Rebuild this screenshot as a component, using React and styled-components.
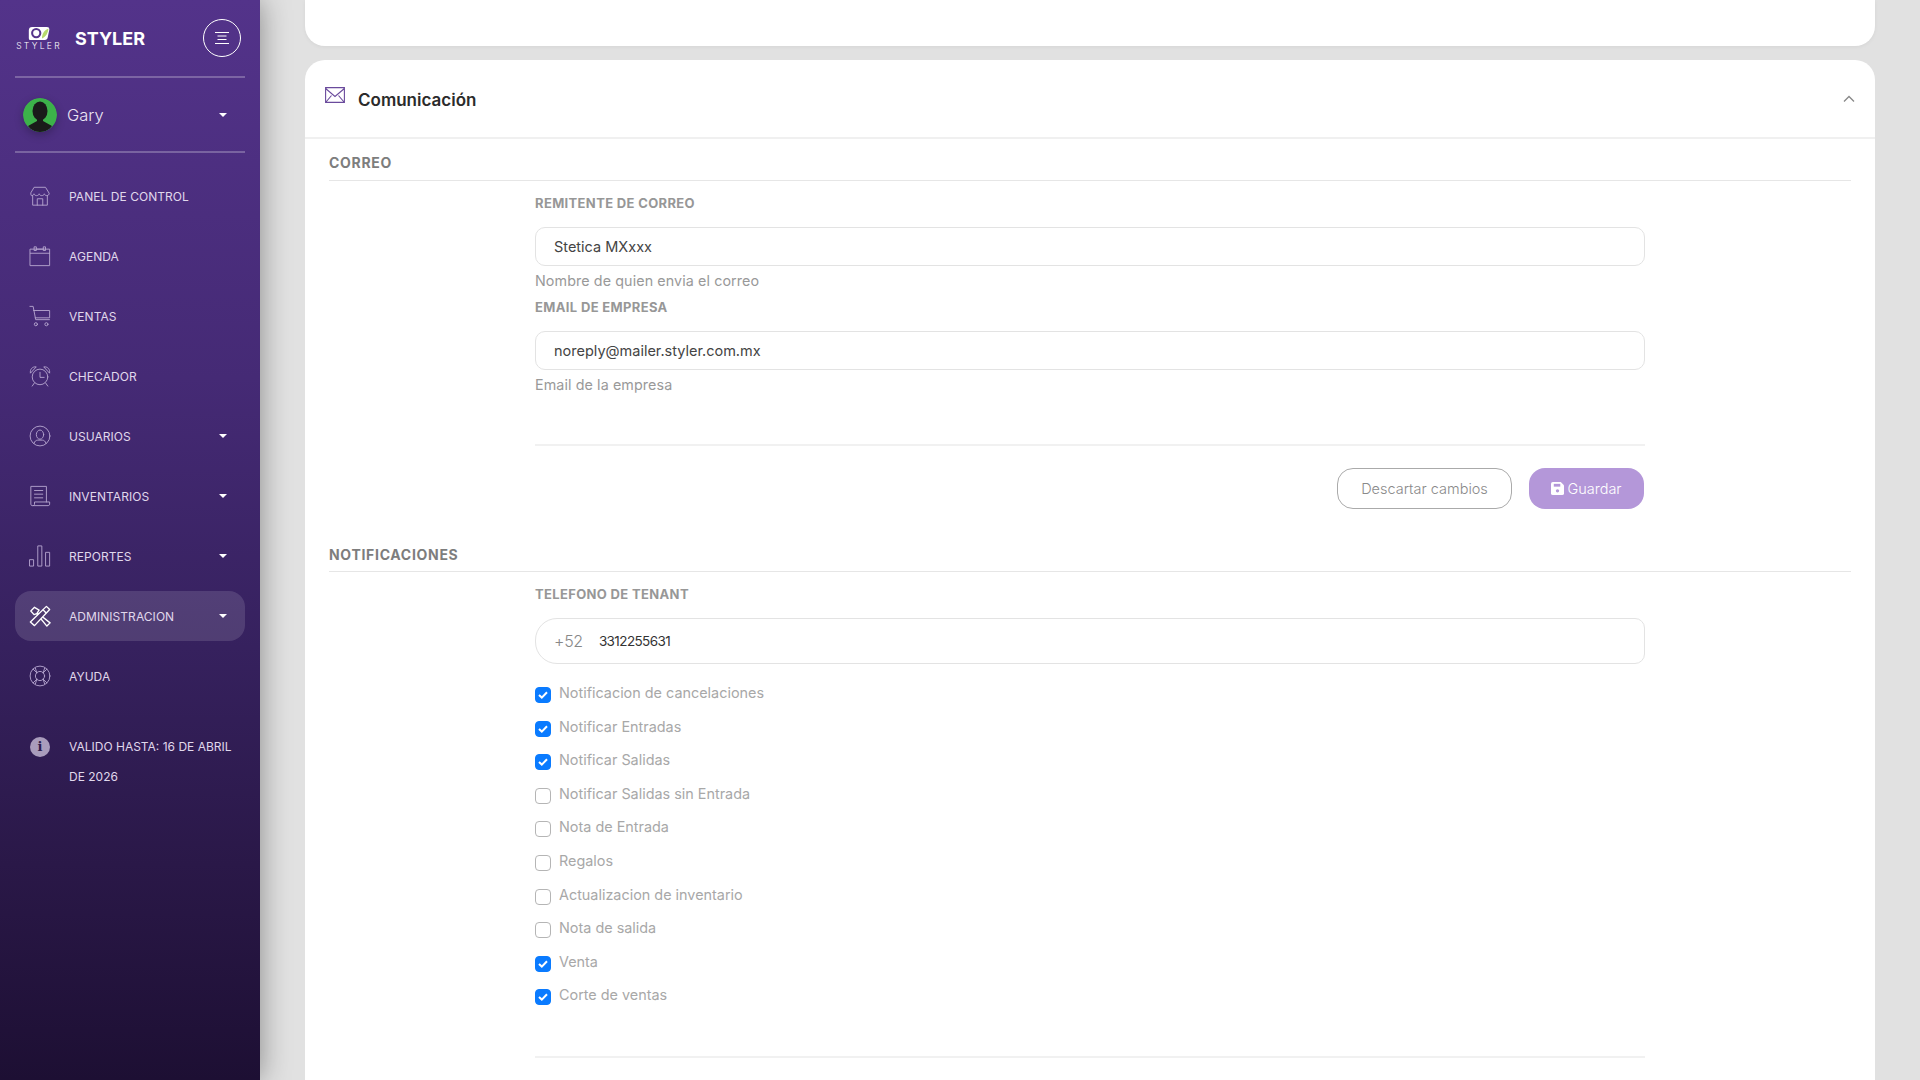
import React from 'react'
import styled, { createGlobalStyle } from 'styled-components'

const GlobalStyle = createGlobalStyle`
  html, body {
    margin: 0;
    height: 100%;
    background: #e1e1e1;
    font-family: Inter, "Noto Sans", "Liberation Sans", sans-serif;
  }
  * { box-sizing: border-box; }
`

const line = { fill: 'none', stroke: 'currentColor', strokeWidth: 1, strokeLinecap: 'round', strokeLinejoin: 'round' }

const icons = {
  store: (
    <g {...line}>
      <path d="M6 2.500h12l4 6.500c0 1.600-1.200 2.600-2.600 2.600-1.300 0-2.400-.8-2.700-2-.3 1.200-1.500 2-2.800 2s-2.400-.8-2.800-2c-.4 1.200-1.500 2-2.800 2s-2.500-.8-2.900-2c-.3 1.200-1.400 2-2.700 2C2.200 11.600 2 10.600 2 9z" />
      <path d="M4 11.500V22h16V11.500M9 22v-7h6v7" />
    </g>
  ),
  calendar: (
    <g {...line}>
      <path d="M1.500 4.500h21v18h-21zM1.500 9h21" />
      <path d="M6 2h2v4H6zM16 2h2v4h-2zM8 4.500h8" />
    </g>
  ),
  cart: (
    <g {...line}>
      <path d="M1 1.500h3.500l2.800 14.500h15" />
      <path d="M5 6h17.500v8H6.800" />
      <circle cx="7.500" cy="21" r="1.700" />
      <circle cx="19" cy="21" r="1.700" />
    </g>
  ),
  alarm: (
    <g {...line}>
      <circle cx="12" cy="13" r="8.500" />
      <path d="M12 8v5.500h4.500M6 19.500 3.500 23M18 19.500l2.500 3.500" />
      <path d="M1.500 8.500C.8 5 3.500 1.500 7.500 2zM22.500 8.500c.7-3.500-2-7-6-6.500z" />
    </g>
  ),
  user: (
    <g {...line}>
      <circle cx="12" cy="12" r="10.800" />
      <ellipse cx="12" cy="10.500" rx="4" ry="5" />
      <path d="M5.500 20c.5-2.500 2.500-3.500 4-3.500h5c1.500 0 3.500 1 4 3.500" />
    </g>
  ),
  list: (
    <g {...line}>
      <path d="M19 18.500V1.500H2v19.500c0 1 .8 1.500 1.500 1.500h17.500c1 0 1.500-.8 1.500-1.500v-2.500H6v2.500c0 .8-.7 1.500-1.500 1.500" />
      <path d="M6 6h9M6 10h9M6 14h9" />
    </g>
  ),
  chart: (
    <g {...line}>
      <path d="M1 16h4v7H1zM10 1h4v22h-4zM18.500 8h4v15h-4z" />
    </g>
  ),
  tools: (
    <g fill="#4e3a6e" stroke="currentColor" strokeWidth="1.500" strokeLinejoin="round">
      <path d="M2 6.500 6 2.500l5 3-2 3 14 11-3.500 3.500-11-13.500-3 1z" />
      <path d="M19 1.500 22.500 5 6 22.500 1.500 18.500z" />
      <path d="M15 5l4 4" fill="none" />
    </g>
  ),
  help: (
    <g {...line}>
      <circle cx="12" cy="12" r="10.800" />
      <circle cx="12" cy="12" r="5" />
      <path d="M4.500 4.500l4 4M19.500 4.500l-4 4M4.500 19.500l4-4M19.500 19.500l-4-4M7 3.500l1.500 5M17 3.500 15.500 8.500M7 20.500l1.500-5M17 20.500l-1.500-5" />
    </g>
  ),
}

const NAV = [
  { icon: 'store', label: 'Panel de control' },
  { icon: 'calendar', label: 'Agenda' },
  { icon: 'cart', label: 'Ventas' },
  { icon: 'alarm', label: 'Checador' },
  { icon: 'user', label: 'Usuarios', caret: true },
  { icon: 'list', label: 'Inventarios', caret: true },
  { icon: 'chart', label: 'Reportes', caret: true },
  { icon: 'tools', label: 'Administracion', caret: true, active: true },
  { icon: 'help', label: 'Ayuda' },
]

const NOTIFICATIONS = [
  { label: 'Notificacion de cancelaciones', on: true },
  { label: 'Notificar Entradas', on: true },
  { label: 'Notificar Salidas', on: true },
  { label: 'Notificar Salidas sin Entrada' },
  { label: 'Nota de Entrada' },
  { label: 'Regalos' },
  { label: 'Actualizacion de inventario' },
  { label: 'Nota de salida' },
  { label: 'Venta', on: true },
  { label: 'Corte de ventas', on: true },
]

const App = () => {
  return (
    <Page>
      <GlobalStyle />
      <Sidebar>
        <Brand>
          <Logo>
            <svg width="23" height="15" viewBox="0 0 28 18">
              <path d="M5 1h18c2 0 3 1 3 3l-2 10c-.3 2-1.500 3-3.500 3H3c-1.500 0-2-1-2-2.500V5c0-2.500 1.500-4 4-4z" fill="#fff" />
              <circle cx="10" cy="8.500" r="5" fill="none" stroke="#57358c" strokeWidth="2.500" />
              <path d="M17 15c0-6 3-10 8-12-1 6-3 10-8 12z" fill="#b6d96b" />
            </svg>
            <LogoText>STYLER</LogoText>
          </Logo>
          <BrandName>STYLER</BrandName>
          <MenuButton>
            <svg width="16" height="14" viewBox="0 0 16 14" fill="none" stroke="#fff" strokeWidth="1">
              <path d="M1 1.500h14M3.500 5h9M3.500 8.500h9M1 12.500h14" />
            </svg>
          </MenuButton>
        </Brand>
        <UserRow>
          <Avatar>
            <svg width="34" height="34" viewBox="0 0 34 34">
              <circle cx="17" cy="17" r="17" fill="#3cb14a" />
              <ellipse cx="17" cy="13" rx="7.500" ry="9.500" fill="#1a1a1a" />
              <path d="M14 20h6v3l9 5c-3 4-7 6-12 6s-9-2-12-6l9-5z" fill="#1a1a1a" />
            </svg>
          </Avatar>
          <UserName>Gary</UserName>
          <Caret />
        </UserRow>
        <Nav>
          {NAV.map((item) => (
            <NavItem key={item.label} $active={item.active}>
              <NavIcon $active={item.active}>
                <svg width="22" height="22" viewBox="0 0 24 24">{icons[item.icon]}</svg>
              </NavIcon>
              <NavLabel>{item.label}</NavLabel>
              {item.caret && <Caret />}
            </NavItem>
          ))}
          <ValidRow>
            <InfoBadge>i</InfoBadge>
            <ValidText>Valido hasta: 16 de abril de 2026</ValidText>
          </ValidRow>
        </Nav>
      </Sidebar>
      <Main>
        <TopCard />
        <Card>
          <CardHeader>
            <svg width="20" height="16" viewBox="0 0 20 16" fill="none" stroke="#6a4a9c" strokeWidth="1.100">
              <path d="M.6.600h18.800v14.800H.6zM.6 1.500 10 9.500l9.400-8M1 15l5.500-6.500M19 15l-5.500-6.500" />
            </svg>
            <CardTitle>Comunicación</CardTitle>
            <Chevron width="12" height="8" viewBox="0 0 12 8" fill="none" stroke="#888" strokeWidth="1.300">
              <path d="M1 6.500 6 1.500l5 5" />
            </Chevron>
          </CardHeader>
          <CardBody>
            <SectionTitle>Correo</SectionTitle>
            <Form>
              <FieldLabel>Remitente de correo</FieldLabel>
              <Field>Stetica MXxxx</Field>
              <Help>Nombre de quien envia el correo</Help>
              <FieldLabel $top={10}>Email de empresa</FieldLabel>
              <Field>noreply@mailer.styler.com.mx</Field>
              <Help>Email de la empresa</Help>
              <Divider $top={51} />
              <Actions>
                <GhostButton>Descartar cambios</GhostButton>
                <SaveButton>
                  <svg width="13" height="13" viewBox="0 0 14 14">
                    <path d="M2 0h8.500L14 3.500V12a2 2 0 0 1-2 2H2a2 2 0 0 1-2-2V2a2 2 0 0 1 2-2z" fill="#fff" />
                    <rect x="3" y="2" width="7" height="3" fill="#b497d9" />
                    <circle cx="7" cy="9.500" r="1.800" fill="#b497d9" />
                  </svg>
                  Guardar
                </SaveButton>
              </Actions>
            </Form>
            <SectionTitle $top={37} $tight>Notificaciones</SectionTitle>
            <Form>
              <FieldLabel>Telefono de tenant</FieldLabel>
              <PhoneField>
                <Prefix>+52</Prefix>
                <PhoneNumber>3312255631</PhoneNumber>
              </PhoneField>
              <Checks>
                {NOTIFICATIONS.map((n) => (
                  <CheckRow key={n.label}>
                    <CheckBox $on={n.on}>
                      {n.on && (
                        <svg width="10" height="8" viewBox="0 0 10 8" fill="none" stroke="#fff" strokeWidth="2">
                          <path d="M1 4l2.800 2.600L9 1.200" />
                        </svg>
                      )}
                    </CheckBox>
                    <CheckLabel>{n.label}</CheckLabel>
                  </CheckRow>
                ))}
              </Checks>
              <Divider $top={50} />
            </Form>
          </CardBody>
        </Card>
      </Main>
    </Page>
  )
}

const Page = styled.div`
  display: flex;
  height: 100vh;
  overflow: hidden;
  background: #e1e1e1;
`

const Sidebar = styled.aside`
  flex: 0 0 260px;
  height: 100%;
  padding: 0 15px;
  background: linear-gradient(180deg, #53338a 0%, #452a75 35%, #36215e 60%, #2a1848 80%, #1d0f33 100%);
  box-shadow: 0 0 28px rgba(0, 0, 0, 0.4);
  position: relative;
  z-index: 2;
`

const Brand = styled.div`
  display: flex;
  align-items: center;
  height: 78px;
  border-bottom: 2px solid rgba(255, 255, 255, 0.25);
`

const Logo = styled.div`
  display: flex;
  flex-direction: column;
  align-items: center;
  width: 49px;
  line-height: 1;
`

const LogoText = styled.span`
  font-size: 8.5px;
  font-weight: 300;
  letter-spacing: 2.3px;
  margin-left: -3px;
  margin-right: -2px;
  color: #fff;
  margin-top: 1px;
`

const BrandName = styled.span`
  margin-left: 11px;
  font-size: 18px;
  font-weight: 700;
  color: #fff;
`

const MenuButton = styled.div`
  display: flex;
  align-items: center;
  justify-content: center;
  width: 38px;
  height: 38px;
  margin-left: auto;
  margin-right: 4px;
  border: 1px solid #fff;
  border-radius: 50%;
`

const UserRow = styled.div`
  display: flex;
  align-items: center;
  height: 75px;
  padding-left: 8px;
  border-bottom: 2px solid rgba(255, 255, 255, 0.25);
`

const Avatar = styled.div`
  width: 34px;
  height: 34px;
  border-radius: 50%;
  overflow: hidden;
  box-shadow: 0 3px 8px rgba(0, 0, 0, 0.25);
`

const UserName = styled.span`
  margin-left: 10px;
  font-size: 16.5px;
  font-weight: 300;
  color: #ece6f4;
`

const Caret = styled.span`
  width: 0;
  height: 0;
  margin-left: auto;
  margin-right: 18px;
  border-top: 4px solid #fff;
  border-left: 4px solid transparent;
  border-right: 4px solid transparent;
`

const Nav = styled.nav`
  display: flex;
  flex-direction: column;
  gap: 10px;
  padding-top: 18px;
`

const NavItem = styled.div`
  display: flex;
  align-items: center;
  height: 50px;
  padding-left: 14px;
  border-radius: 16px;
  background: ${({ $active }) => ($active ? 'rgba(255, 255, 255, 0.13)' : 'transparent')};
`

const NavIcon = styled.span`
  display: flex;
  color: ${({ $active }) => ($active ? '#fff' : '#b6a5cf')};
`

const NavLabel = styled.span`
  margin-left: 18px;
  font-size: 12px;
  font-weight: 400;
  letter-spacing: 0.05px;
  text-transform: uppercase;
  color: #e0d8ec;
`

const ValidRow = styled.div`
  display: flex;
  align-items: flex-start;
  padding: 21px 0 0 15px;
`

const InfoBadge = styled.span`
  flex: 0 0 20px;
  height: 20px;
  margin-top: 5px;
  border-radius: 50%;
  background: #a99cbc;
  color: #2f1d4e;
  font-family: "DejaVu Serif", "Liberation Serif", serif;
  font-size: 13px;
  font-weight: 700;
  line-height: 20px;
  text-align: center;
`

const ValidText = styled.span`
  margin-left: 19px;
  font-size: 12px;
  letter-spacing: 0;
  line-height: 30px;
  text-transform: uppercase;
  color: #e0d8ec;
`

const Main = styled.main`
  flex: 1;
  min-width: 0;
  padding: 0 45px;
`

const TopCard = styled.div`
  height: 46px;
  background: #fff;
  border-radius: 0 0 20px 20px;
  box-shadow: 0 1px 4px rgba(0, 0, 0, 0.05);
`

const Card = styled.section`
  margin-top: 14px;
  height: 1100px;
  background: #fff;
  border-radius: 20px 20px 0 0;
`

const CardHeader = styled.header`
  display: flex;
  align-items: center;
  height: 79px;
  padding: 3px 20px 0;
  border-bottom: 2px solid #f0f0f0;
  svg:first-child { margin-top: -10px; }
`

const CardTitle = styled.h2`
  margin: 0 0 0 13px;
  font-size: 17px;
  font-weight: 600;
  color: #2b2b2b;
`

const Chevron = styled.svg`
  margin-left: auto;
  margin-right: 0;
  margin-top: -3px;
`

const CardBody = styled.div`
  padding: 0 24px;
`

const SectionTitle = styled.h3`
  margin: ${({ $top }) => $top || 15}px 0 0;
  padding-bottom: ${({ $tight }) => ($tight ? 8 : 9)}px;
  border-bottom: 1px solid #e6e6e6;
  font-size: 14px;
  line-height: 17px;
  font-weight: 700;
  letter-spacing: 0.7px;
  text-transform: uppercase;
  color: #7d7d7d;
`

const Form = styled.div`
  width: 1110px;
  margin-left: 206px;
`

const FieldLabel = styled.div`
  margin-top: ${({ $top }) => $top || 14}px;
  font-size: 13px;
  line-height: 16px;
  font-weight: 700;
  letter-spacing: 0.35px;
  text-transform: uppercase;
  color: #979797;
`

const Field = styled.div`
  display: flex;
  align-items: center;
  height: 39px;
  margin-top: 16px;
  padding-left: 18px;
  border: 1px solid #e3e3e3;
  border-radius: 10px;
  font-size: 14.5px;
  color: #444;
`

const Help = styled.div`
  margin-top: 6px;
  font-size: 14.3px;
  letter-spacing: 0.1px;
  line-height: 17px;
  color: #999;
`

const Divider = styled.hr`
  margin: ${({ $top }) => $top}px 0 0;
  border: 0;
  border-top: 2px solid #f1f1f1;
`

const Actions = styled.div`
  display: flex;
  justify-content: flex-end;
  gap: 17px;
  margin-top: 22px;
  padding-right: 1px;
`

const GhostButton = styled.button`
  width: 175px;
  height: 41px;
  border: 1px solid #aaa;
  border-radius: 16px;
  background: #fff;
  font: inherit;
  font-size: 14.5px;
  font-weight: 300;
  color: #8a8a8a;
`

const SaveButton = styled.button`
  display: flex;
  align-items: center;
  justify-content: center;
  gap: 3px;
  width: 115px;
  height: 41px;
  border: 0;
  border-radius: 16px;
  background: #b497d9;
  font: inherit;
  font-size: 14.5px;
  font-weight: 300;
  color: #fff;
`

const PhoneField = styled.div`
  display: flex;
  align-items: center;
  height: 46px;
  margin-top: 16px;
  padding-left: 18px;
  border: 1px solid #e3e3e3;
  border-radius: 22px 10px 10px 22px;
`

const Prefix = styled.span`
  font-size: 16px;
  font-weight: 300;
  letter-spacing: -0.3px;
  color: #888;
`

const PhoneNumber = styled.span`
  margin-left: 16px;
  font-size: 13.5px;
  letter-spacing: -0.6px;
  color: #333;
`

const Checks = styled.div`
  display: flex;
  flex-direction: column;
  gap: 13.6px;
  margin-top: 20px;
`

const CheckRow = styled.label`
  display: flex;
  align-items: flex-start;
  height: 20px;
`

const CheckBox = styled.span`
  display: flex;
  align-items: center;
  justify-content: center;
  width: 16px;
  height: 16px;
  margin-top: 3px;
  border-radius: 4px;
  border: 1px solid ${({ $on }) => ($on ? '#0a7bff' : '#b5b5b5')};
  background: ${({ $on }) => ($on ? '#0a7bff' : '#fff')};
`

const CheckLabel = styled.span`
  margin-left: 8px;
  font-size: 14.4px;
  line-height: 18px;
  color: #a8a8a8;
`

export default App
